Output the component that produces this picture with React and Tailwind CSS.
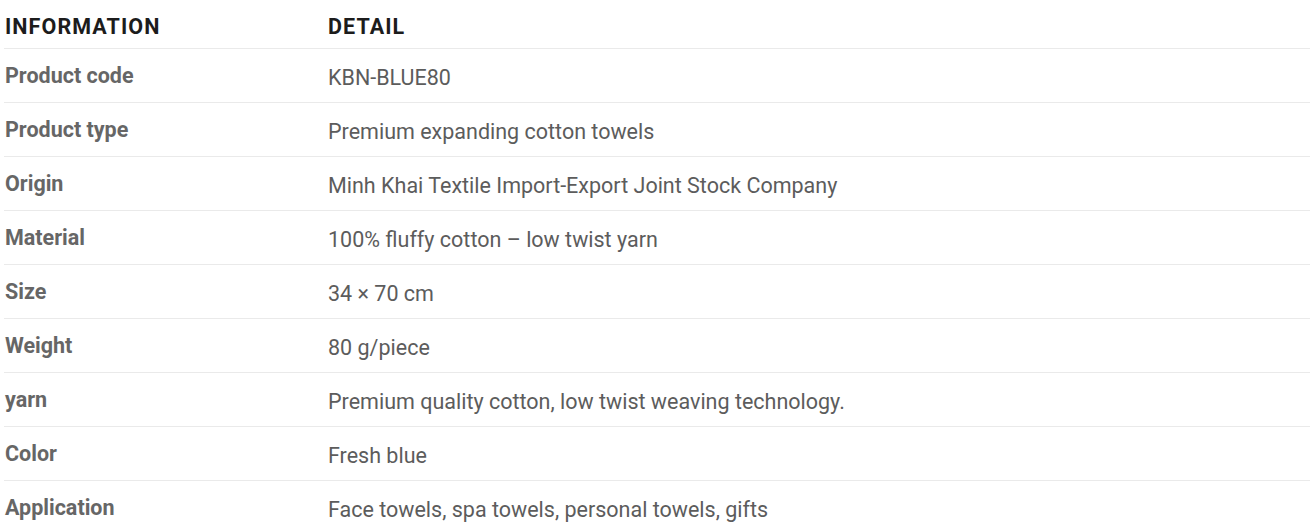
const rows = [
  ['Product code', 'KBN-BLUE80'],
  ['Product type', 'Premium expanding cotton towels'],
  ['Origin', 'Minh Khai Textile Import-Export Joint Stock Company'],
  ['Material', '100% fluffy cotton – low twist yarn'],
  ['Size', '34 × 70 cm'],
  ['Weight', '80 g/piece'],
  ['yarn', 'Premium quality cotton, low twist weaving technology.'],
  ['Color', 'Fresh blue'],
  ['Application', 'Face towels, spa towels, personal towels, gifts'],
];

export default function App() {
  return (
    <div className="bg-white h-[531px] overflow-hidden font-['Roboto',sans-serif]">
      <div className="ml-[4px] w-[1306px]">
        <div className="grid grid-cols-[324px_1fr] h-[49px] border-b border-[#eaeaea] text-[21.5px] font-bold tracking-[0.05em] text-[#1c1c1c] leading-none items-start pt-[16px]">
          <div className="pl-px">INFORMATION</div>
          <div>DETAIL</div>
        </div>
        {rows.map(([k, v]) => (
          <div key={k} className="grid grid-cols-[324px_1fr] h-[54px] border-b border-[#eaeaea] text-[21.5px] leading-none items-start">
            <div className="pl-px pt-[16px] font-bold text-[#666666]">{k}</div>
            <div className="pt-[18px] text-[#5c5c5c]">{v}</div>
          </div>
        ))}
      </div>
    </div>
  );
}
